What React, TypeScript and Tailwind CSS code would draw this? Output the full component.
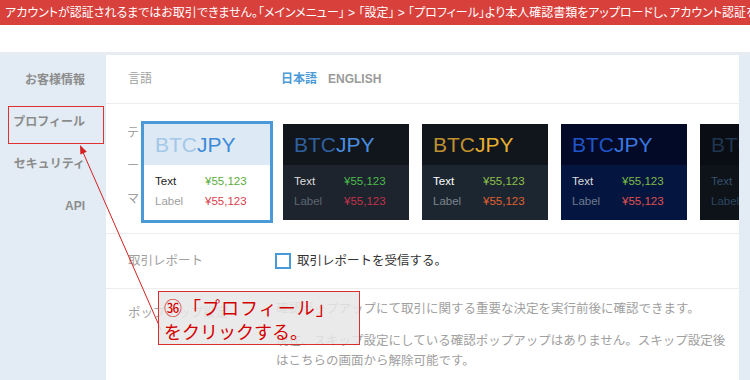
import React from 'react';

type Theme = {
  head: string;
  body: string;
  btc: string;
  jpy: string;
  text: string;
  label: string;
  up: string;
  down: string;
  selected?: boolean;
};

const themes: Theme[] = [
  { head: 'bg-[#dde9f4]', body: 'bg-white', btc: 'text-[#a3c8e8]', jpy: 'text-[#3d8ad8]', text: 'text-[#222222]', label: 'text-[#a0a0a0]', up: 'text-[#5aac3a]', down: 'text-[#d9414a]', selected: true },
  { head: 'bg-[#11161d]', body: 'bg-[#1d242e]', btc: 'text-[#2f609e]', jpy: 'text-[#4a8ee0]', text: 'text-[#dddddd]', label: 'text-[#5f6670]', up: 'text-[#4cbb4a]', down: 'text-[#c2324a]' },
  { head: 'bg-[#11161d]', body: 'bg-[#1c2630]', btc: 'text-[#c0902e]', jpy: 'text-[#e8b030]', text: 'text-[#ffffff]', label: 'text-[#7d858e]', up: 'text-[#8cc04a]', down: 'text-[#e06030]' },
  { head: 'bg-[#020a28]', body: 'bg-[#04163f]', btc: 'text-[#2055c8]', jpy: 'text-[#3a78e0]', text: 'text-[#dddddd]', label: 'text-[#6f7a90]', up: 'text-[#7cbc48]', down: 'text-[#e05050]' },
  { head: 'bg-[#0a0e14]', body: 'bg-[#0e1319]', btc: 'text-[#1f3550]', jpy: 'text-[#1f3550]', text: 'text-[#34506c]', label: 'text-[#2c4560]', up: 'text-[#2c4560]', down: 'text-[#2c4560]' },
];

function ThemeCard({ t }: { t: Theme }) {
  return (
    <div
      className={`w-[126px] h-[96px] shrink-0 flex flex-col ${t.body} ${
        t.selected ? 'outline-[3px] outline-solid outline-[#4a9ad8]' : ''
      }`}
    >
      <div className={`h-[41px] ${t.head} flex items-center pl-[11px] text-[21px] leading-none`}>
        <span className={t.btc}>BTC</span>
        <span className={t.jpy}>JPY</span>
      </div>
      <div className="flex-1 pl-[11px] pt-[6px] text-[11.5px] leading-[20px]">
        <div className="flex">
          <span className={`w-[50px] ${t.text}`}>Text</span>
          <span className={t.up}>¥55,123</span>
        </div>
        <div className="flex">
          <span className={`w-[50px] ${t.label}`}>Label</span>
          <span className={t.down}>¥55,123</span>
        </div>
      </div>
    </div>
  );
}

export default function App() {
  const menu = ['お客様情報', 'プロフィール', 'セキュリティ', 'API'];

  return (
    <div className="relative w-[750px] h-[380px] overflow-hidden bg-white [font-family:'Liberation_Sans','Noto_Sans_CJK_JP',sans-serif]">
      {/* Warning banner */}
      <div className="h-[25px] bg-[#d8403b] text-white text-[12px] px-[5px] flex items-center whitespace-nowrap overflow-hidden [font-feature-settings:'palt']">
        アカウントが認証されるまではお取引できません。「メインメニュー」 &gt; 「設定」 &gt; 「プロフィール」より本人確認書類をアップロードし、アカウント認証を完了してください。
      </div>
      <div className="h-[27px] bg-white" />
      <div className="h-[3px] bg-[#e6ecf1]" />

      <div className="flex h-[325px] bg-[#e3ecf4]">
        {/* Side menu */}
        <div className="w-[106px] shrink-0 pt-[4px] pr-[21px]">
          {menu.map((m) => (
            <div key={m} className="h-[42px] flex items-center justify-end text-[12px] font-bold text-[#8c8c8c]">
              {m}
            </div>
          ))}
        </div>

        {/* Settings panel */}
        <div className="w-[633px] shrink-0 bg-white overflow-hidden flex flex-col">
          <div className="h-[49px] shrink-0 border-b border-[#eeeeee] flex items-center pl-[22px] text-[12px]">
            <span className="w-[153px] text-[#a0a0a0]">言語</span>
            <span className="font-bold text-[#4a9ad8]">日本語</span>
            <span className="ml-[11px] font-bold text-[#9a9a9a]">ENGLISH</span>
          </div>

          <div className="h-[130px] shrink-0 border-b border-[#eeeeee] flex items-start pl-[21px] pt-[13px]">
            <span className="w-[14px] shrink-0 text-[12px] leading-[33px] text-[#a0a0a0]">テーマ</span>
            <div className="ml-[3px] mt-[7px] flex gap-[13px]">
              {themes.map((t, i) => (
                <ThemeCard key={i} t={t} />
              ))}
            </div>
          </div>

          <div className="h-[55px] shrink-0 border-b border-[#eeeeee] flex items-center pl-[22px] text-[12.5px]">
            <span className="w-[147px] text-[#a0a0a0]">取引レポート</span>
            <span className="w-[16px] h-[16px] border-2 border-[#4a9ad8] bg-white" />
            <span className="ml-[6px] text-[#333333]">取引レポートを受信する。</span>
          </div>

          <div className="flex pl-[22px] pt-[10px] text-[12.5px] leading-[20px]">
            <span className="w-[148px] mt-[4px] text-[#a0a0a0]">ポップアップ設定</span>
            <div className="w-[456px] text-[#a0a0a0]">
              <p>確認ポップアップにて取引に関する重要な決定を実行前後に確認できます。</p>
              <p className="mt-[12px]">現在、スキップ設定にしている確認ポップアップはありません。スキップ設定後はこちらの画面から解除可能です。</p>
            </div>
          </div>
        </div>
        <div className="flex-1" />
      </div>

      {/* Annotation */}
      <div className="absolute left-[8px] top-[106px] w-[96px] h-[38px] border-[1.5px] border-[#e03030]" />
      <svg className="absolute left-0 top-0 pointer-events-none" width="750" height="380">
        <line x1="161" y1="330" x2="82" y2="150" stroke="#d42020" strokeWidth="1" />
        <polygon points="80,145 86.8,151.8 80.4,154.6" fill="#d42020" />
      </svg>
      <div className="absolute left-[158px] top-[291px] w-[202px] h-[54px] border border-[#d83030] bg-[#e6e6e6]/85 text-[#d40000] text-[18px] leading-[24px] pl-[5px] pt-[3px] [font-family:'Noto_Sans_CJK_JP',sans-serif]">
        <div className="tracking-[1px]">㊱「プロフィール」</div>
        <div>をクリックする。</div>
      </div>
    </div>
  );
}
